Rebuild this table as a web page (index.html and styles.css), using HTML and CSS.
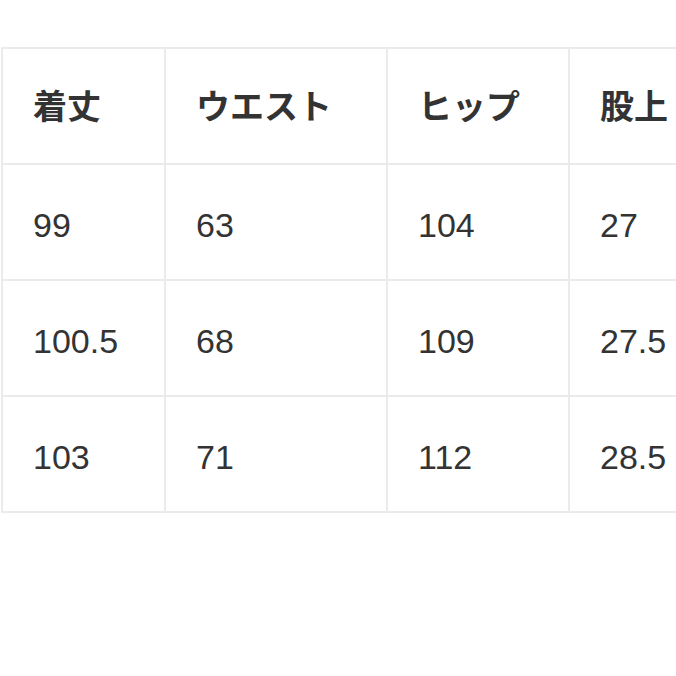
FILE: index.html
```html
<!DOCTYPE html>
<html lang="ja">
<head>
<meta charset="utf-8">
<link rel="stylesheet" href="styles.css">
</head>
<body>
<div class="page">
  <div class="size-table">
    <div class="cell head">着丈</div>
    <div class="cell head">ウエスト</div>
    <div class="cell head">ヒップ</div>
    <div class="cell head">股上</div>
    <div class="cell">99</div>
    <div class="cell">63</div>
    <div class="cell">104</div>
    <div class="cell">27</div>
    <div class="cell">100.5</div>
    <div class="cell">68</div>
    <div class="cell">109</div>
    <div class="cell">27.5</div>
    <div class="cell">103</div>
    <div class="cell">71</div>
    <div class="cell">112</div>
    <div class="cell">28.5</div>
  </div>
</div>
</body>
</html>
```

FILE: styles.css
```css
html, body {
  margin: 0;
  padding: 0;
  background: #ffffff;
  overflow: hidden;
}
.page {
  width: 676px;
  height: 676px;
  overflow: hidden;
  padding: 47px 0 0 1px;
  box-sizing: border-box;
}
.size-table {
  display: grid;
  grid-template-columns: 163px 222px 182px 230px;
  grid-template-rows: 116px 116px 116px 116px;
  width: max-content;
  border-left: 2px solid #ebebeb;
  border-top: 2px solid #ebebeb;
}
.cell {
  display: flex;
  align-items: center;
  padding-left: 30px;
  padding-top: 7px;
  border-right: 2px solid #ebebeb;
  border-bottom: 2px solid #ebebeb;
  font-family: "Liberation Sans", Arial, "Noto Sans CJK JP", sans-serif;
  font-size: 34px;
  color: #333333;
  white-space: nowrap;
}
.cell.head {
  padding-top: 0;
  padding-bottom: 4px;
  font-family: "Noto Sans CJK JP", sans-serif;
  font-weight: 700;
  font-size: 34px;
  color: #333333;
}
```
